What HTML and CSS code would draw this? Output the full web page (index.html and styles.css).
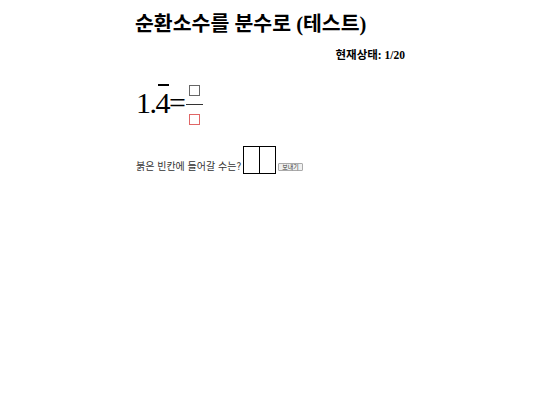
FILE: index.html
```html
<!DOCTYPE html>
<html lang="ko">
<head>
<meta charset="utf-8">
<link rel="stylesheet" href="styles.css">
</head>
<body>
<div class="wrap">
  <h1 class="title">순환소수를 분수로 (테스트)</h1>
  <div class="status">현재상태: 1/20</div>
  <div class="problem">
    <span class="dec">1.<span class="rep">4</span>=</span>
    <span class="frac">
      <span class="num"><span class="sq"></span></span>
      <span class="den"><span class="sq red"></span></span>
    </span>
  </div>
  <div class="answer">
    <span class="q">붉은 빈칸에 들어갈 수는?</span>
    <span class="boxes"><span class="cell"></span><span class="cell"></span></span>
    <button class="send">보내기</button>
  </div>
</div>
</body>
</html>
```

FILE: styles.css
```css
html, body { margin: 0; padding: 0; background: #fff; }
body { font-family: "Liberation Serif", "Noto Sans CJK KR", serif; color: #000; }
.wrap { width: 270px; margin: 0 auto; padding-top: 10px; }
.title { font-size: 20.5px; font-weight: bold; margin: 0; line-height: 28px; }
.status { text-align: right; font-size: 11.5px; font-weight: bold; margin-top: 9px; line-height: 16px; }
.problem { display: flex; align-items: flex-start; margin-top: 22px; }
.dec { font-size: 30px; line-height: 30px; margin-top: 3px; margin-left: 1px; letter-spacing: -1.5px; }
.rep { position: relative; }
.rep::before { content: ""; position: absolute; left: 2px; right: 0; top: -2px; height: 2px; background: #000; }
.frac { display: flex; flex-direction: column; align-items: center; margin-left: 2px; }
.num { border-bottom: 1px solid #333; padding: 0 3px 8px; }
.den { padding-top: 9px; }
.sq { display: block; width: 9px; height: 9px; border: 1px solid #666; }
.sq.red { border-color: #e06666; }
.answer { display: flex; align-items: flex-end; margin-top: 21px; }
.q { font-size: 10px; color: #333; font-family: "Noto Sans CJK KR", sans-serif; line-height: 14px; margin-bottom: 1px; margin-left: 1px; }
.boxes { display: flex; border: 1px solid #000; margin-left: 2px; height: 26px; }
.cell { width: 15px; }
.cell + .cell { border-left: 1px solid #000; }
.send { font-size: 6px; padding: 0 3px; margin-left: 2px; margin-bottom: 3px; height: 8px; line-height: 6px; font-family: "Noto Sans CJK KR", sans-serif; border: 1px solid #aaa; background: #f0f0f0; color: #333; border-radius: 1px; }
```
